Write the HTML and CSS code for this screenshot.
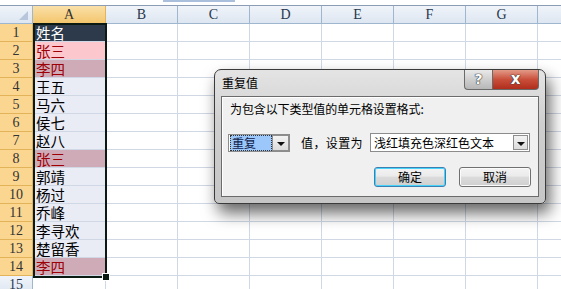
FILE: index.html
```html
<!DOCTYPE html>
<html lang="zh">
<head>
  <meta charset="UTF-8">
  <title>重复值</title>
  <link rel="stylesheet" href="styles.css">
</head>
<body>

<div class="topbar"><span class="tab"></span></div>

<div class="sheet" id="sheet">
  <div class="hd corner"><span class="tri"></span></div>
  <div class="hd on">A</div>
  <div class="hd">B</div>
  <div class="hd">C</div>
  <div class="hd">D</div>
  <div class="hd">E</div>
  <div class="hd">F</div>
  <div class="hd">G</div>
  <div class="hd"></div>
</div>

<div class="selbox"><span class="handle"></span></div>

<div class="dialog">
  <div class="dlg-title">重复值</div>
  <div class="dlg-btns">
    <span class="help">?</span>
    <span class="close">x</span>
  </div>
  <div class="panel">
    <div class="prompt">为包含以下类型值的单元格设置格式:</div>
    <div class="fields">
      <div class="combo small">
        <span class="val"><span class="hl">重复</span></span>
        <span class="arrow"></span>
      </div>
      <span class="mid">值，设置为</span>
      <div class="combo wide">
        <span class="val">浅红填充色深红色文本</span>
        <span class="arrow"></span>
      </div>
    </div>
    <div class="actions">
      <button class="btn default">确定</button>
      <button class="btn">取消</button>
    </div>
  </div>
</div>

<script>
  const names = ["姓名", "张三", "李四", "王五", "马六", "侯七", "赵八", "张三",
                 "郭靖", "杨过", "乔峰", "李寻欢", "楚留香", "李四"];
  const sheet = document.getElementById("sheet");

  for (let r = 1; r <= 15; r++) {
    let html = `<div class="rh ${r <= 14 ? "on" : ""}">${r}</div>`;
    let cls = "a";
    if (r === 1) cls += " title";
    else if (r === 2) cls += " dup-light";
    else if (r === 3 || r === 8 || r === 14) cls += " dup";
    else if (r <= 14) cls += " sel";
    html += `<div class="c ${cls}"><span>${names[r - 1] || ""}</span></div>`;
    for (let c = 0; c < 7; c++) html += `<div class="c"></div>`;
    sheet.insertAdjacentHTML("beforeend", html);
  }
</script>

</body>
</html>
```

FILE: styles.css
```css
body {
  margin: 0;
  width: 561px;
  height: 289px;
  overflow: hidden;
  position: relative;
  background: #fff;
  font-family: "Noto Sans CJK SC", "Liberation Sans", sans-serif;
}

.topbar {
  height: 5px;
  border-bottom: 1px solid #8a9db5;
  position: relative;
  background: #fff;
}
.topbar .tab {
  position: absolute;
  left: 163px;
  top: 0;
  width: 72px;
  height: 2px;
  background: #a9bfdc;
}

.sheet {
  display: grid;
  grid-template-columns: 33px 73px repeat(7, 72px);
  grid-auto-rows: 18px;
}

.hd, .rh {
  box-sizing: border-box;
  border-right: 1px solid #9eb6ce;
  border-bottom: 1px solid #9eb6ce;
  background: linear-gradient(#f0f4fa, #dde6f1);
  color: #27364c;
  font-family: "Liberation Serif", serif;
  font-size: 14px;
  text-align: center;
  line-height: 17px;
}
.hd.on, .rh.on {
  background: linear-gradient(#fae0a8, #f3c66d);
  border-color: #e3b35a;
  color: #333;
}
.rh.on {
  background: #fbd691;
}
.corner {
  position: relative;
}
.corner .tri {
  position: absolute;
  right: 4px;
  bottom: 3px;
  width: 0;
  height: 0;
  border-left: 9px solid transparent;
  border-bottom: 9px solid #b7c6da;
}

.c {
  box-sizing: border-box;
  border-right: 1px solid #d0d7e5;
  border-bottom: 1px solid #d0d7e5;
  font-size: 14.5px;
  padding-left: 3px;
  white-space: nowrap;
  overflow: hidden;
}
.c span {
  display: block;
  height: 17px;
  line-height: 17px;
}
.c.sel {
  background: #e9ebf5;
  color: #000;
}
.c.title {
  background: #2d3a4c;
  color: #fff;
}
.c.dup-light {
  background: #fcc7cd;
  color: #9c0006;
}
.c.dup {
  background: #cfabb7;
  color: #9c0006;
}

.selbox {
  position: absolute;
  left: 33px;
  top: 23px;
  width: 70px;
  height: 251px;
  border: 2px solid #0c1a14;
}
.selbox .handle {
  position: absolute;
  right: -5px;
  bottom: -5px;
  width: 6px;
  height: 6px;
  background: #0c1a14;
  border: 1px solid #fff;
}

.dialog {
  position: absolute;
  left: 214px;
  top: 69px;
  width: 318px;
  height: 127px;
  padding: 0 6px 6px;
  border: 1px solid #3b3b3b;
  border-radius: 7px 7px 5px 5px;
  background: linear-gradient(#e4e4e4, #cfcfcf 40%, #c6c6c6);
  box-shadow: 4px 9px 16px rgba(0, 0, 0, 0.6);
  font-size: 12px;
  color: #000;
}

.dlg-title {
  height: 26px;
  line-height: 26px;
  padding-left: 1px;
  font-size: 12px;
}

.dlg-btns {
  position: absolute;
  top: 0;
  right: 6px;
  display: flex;
}
.help, .close {
  box-sizing: border-box;
  height: 20px;
  border: 1px solid #6a6a6a;
  border-top: none;
  color: #fff;
  text-align: center;
  font-family: "DejaVu Sans", sans-serif;
  font-weight: bold;
  line-height: 18px;
  text-shadow: 0 0 1px #333, 0 0 1px #333, 0 0 1px #333;
}
.help {
  width: 28px;
  border-radius: 0 0 0 4px;
  border-right: none;
  background: linear-gradient(#e9e9e9, #cfcfcf 50%, #b7b7b7);
  font-size: 14px;
}
.close {
  width: 47px;
  border-radius: 0 0 4px 0;
  background: linear-gradient(#e39a88, #c94f3b 50%, #b02d1c);
  font-size: 15px;
}

.panel {
  box-sizing: border-box;
  height: 101px;
  border: 1px solid #6b6b6b;
  box-shadow: inset 1px 1px 0 #fff;
  background: #f0f0f0;
  padding: 5px 0 0 6px;
}

.prompt {
  height: 14px;
  line-height: 14px;
  margin-left: 2px;
  letter-spacing: -0.1px;
}

.fields {
  display: flex;
  align-items: center;
  height: 19px;
  margin-top: 17px;
}
.combo {
  box-sizing: border-box;
  display: flex;
  align-items: center;
  border: 1px solid #8c8c8c;
  background: #fff;
}
.combo.small {
  width: 62px;
  height: 18px;
}
.combo.wide {
  width: 160px;
  height: 19px;
  margin-left: 7px;
}
.combo .val {
  flex: 1;
  padding-left: 3px;
  line-height: 15px;
  white-space: nowrap;
}
.combo.small .val {
  padding-left: 1px;
  height: 16px;
}
.hl {
  display: block;
  height: 14px;
  line-height: 14px;
  border: 1px dotted #333;
  background: #9cc7fb;
  color: #10224a;
  padding-left: 1px;
}
.arrow {
  box-sizing: border-box;
  width: 17px;
  height: 16px;
  border: 1px solid #8e8e8e;
  background: linear-gradient(#f3f3f3, #dcdcdc);
  position: relative;
}
.combo.wide .arrow {
  width: 15px;
  height: 15px;
  margin-right: 1px;
}
.arrow::after {
  content: "";
  position: absolute;
  left: 50%;
  top: 6px;
  margin-left: -4px;
  border-left: 4px solid transparent;
  border-right: 4px solid transparent;
  border-top: 4px solid #111;
}
.mid {
  margin-left: 11px;
  letter-spacing: 0.4px;
}

.actions {
  display: flex;
  justify-content: flex-end;
  gap: 13px;
  margin-top: 15px;
  padding-right: 7px;
}
.btn {
  box-sizing: border-box;
  width: 72px;
  height: 20px;
  padding: 0;
  border: 1px solid #707070;
  border-radius: 3px;
  background: linear-gradient(#f3f3f3, #ebebeb 45%, #dcdcdc 50%, #cfcfcf);
  box-shadow: inset 0 0 0 1px #fbfbfb;
  font-family: "Noto Sans CJK SC", sans-serif;
  font-size: 12px;
  color: #000;
  line-height: 16px;
}
.btn.default {
  border-color: #3c7fb1;
  box-shadow: inset 0 0 0 1px #48d3fb;
}
```
